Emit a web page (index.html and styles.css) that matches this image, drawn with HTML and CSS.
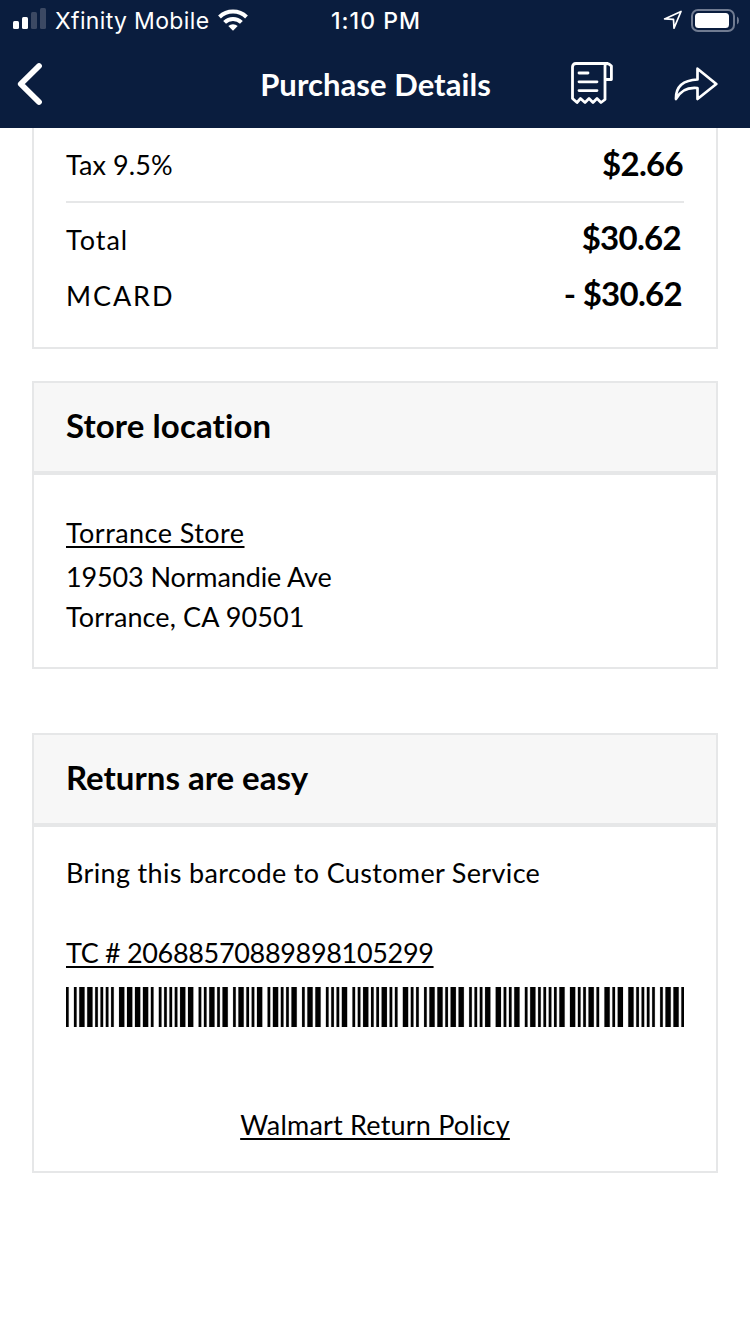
FILE: index.html
```html
<!DOCTYPE html>
<html lang="en">
<head>
<meta charset="utf-8">
<title>Purchase Details</title>
<link rel="stylesheet" href="styles.css">
</head>
<body>
<header class="top">
  <div class="status">
    <div class="status-left">
      <svg class="signal" width="34" height="22" viewBox="0 0 34 22"><g fill="#fff"><rect x="0" y="13" width="6" height="8" rx="1.5"/><rect x="9" y="9" width="6" height="12" rx="1.5"/></g><g fill="#3c4963"><rect x="18" y="4" width="6" height="17" rx="1.5"/><rect x="27" y="0" width="6" height="21" rx="1.5"/></g></svg>
      <span class="carrier">Xfinity Mobile</span>
      <svg class="wifi" width="30" height="22" viewBox="0 0 30 22"><g fill="none" stroke="#fff" stroke-width="4"><path d="M1.5 8A19.5 19.5 0 0 1 28.5 8"/><path d="M6.6 13.4A12 12 0 0 1 23.4 13.4"/></g><path fill="#fff" d="M10.3 17A7 7 0 0 1 19.7 17L15 21.8Z"/></svg>
    </div>
    <span class="time">1:10 PM</span>
    <div class="status-right">
      <svg width="20" height="20" viewBox="0 0 20 20"><path d="M1.6 8.9L18 1.5L11 18.2L10.5 9.4Z" fill="none" stroke="#fff" stroke-width="1.7" stroke-linejoin="round"/></svg>
      <svg width="48" height="23" viewBox="0 0 48 23"><rect x="1" y="1" width="42" height="21" rx="6" fill="none" stroke="#707b91" stroke-width="2"/><rect x="4" y="4" width="34" height="15" rx="3.5" fill="#fff"/><path d="M46 7.5Q48 8.5 48 11.5T46 15.5Z" fill="#707b91"/></svg>
    </div>
  </div>
  <nav class="nav">
    <svg class="back" width="27" height="44" viewBox="0 0 27 44"><path d="M23 4L4.8 22L23 40" fill="none" stroke="#fff" stroke-width="5.8" stroke-linecap="round" stroke-linejoin="round"/></svg>
    <h1 class="title">Purchase Details</h1>
    <div class="actions">
      <svg class="receipt" width="42" height="43" viewBox="0 0 42 43"><g fill="none" stroke="#fff" stroke-width="2.8" stroke-linejoin="round" stroke-linecap="round"><path d="M34 37.5V4Q34 1.5 36 1.5T40.4 4V17.5H35M36.5 1.5H5Q1.5 1.5 1.5 5V36.5L6 40.5L9.5 36.5L14 40.5L18 36.5L22 40.5L26 36.5L30 40.5L34 37.5"/><path d="M8 11H17M8 19.8H26M8 28.6H26"/></g></svg>
      <svg width="44" height="34" viewBox="0 0 44 34"><path d="M23.5 1.7L42.3 17L23.5 32V21Q8.5 19.5 2 32Q1.5 13.5 23.5 12.5Z" fill="none" stroke="#fff" stroke-width="2.7" stroke-linejoin="round"/></svg>
    </div>
  </nav>
</header>
<main class="content">
  <section class="card summary">
    <div class="row tax"><span class="label tax-label">Tax 9.5%</span><b class="amount tax-amount">$2.66</b></div>
    <div class="row total"><span class="label total-label">Total</span><b class="amount total-amount">$30.62</b></div>
    <div class="row"><span class="label card-label">MCARD</span><b class="amount">- $30.62</b></div>
  </section>
  <section class="card store">
    <h2 class="card-head store-head">Store location</h2>
    <div class="store-body">
      <a class="link store-link">Torrance Store</a>
      <p class="line street">19503 Normandie Ave</p>
      <p class="line city">Torrance, CA 90501</p>
    </div>
  </section>
  <section class="card returns">
    <h2 class="card-head">Returns are easy</h2>
    <div class="returns-body">
      <p class="line bring">Bring this barcode to Customer Service</p>
      <a class="link tc">TC # 20688570889898105299</a>
      <svg class="barcode" id="barcode" viewBox="0 0 233 40" preserveAspectRatio="none"></svg>
      <a class="link policy">Walmart Return Policy</a>
    </div>
  </section>
</main>
<script src="barcode.js"></script>
</body>
</html>
```
FILE: styles.css
```css
* { box-sizing: border-box; }
body { margin: 0; background: #fff; color: #000; font-family: Lato, sans-serif; font-variant-ligatures: none; }
h1, h2, p { margin: 0; }
svg { display: block; flex: none; }
.top { height: 128px; background: #0a1d3e; color: #fff; }
.status { height: 40px; display: grid; grid-template-columns: 1fr auto 1fr; align-items: center; padding: 0 11px 0 13px; font-family: Inter, sans-serif; white-space: nowrap; }
.status-left { display: flex; align-items: center; }
.signal { margin-right: 8px; margin-top: -2px; }
.carrier { font-size: 23px; letter-spacing: .35px; width: 154px; margin-right: 9px; padding-top: 2px; }
.time { font-size: 23px; font-weight: 500; letter-spacing: 1.05px; padding-top: 2px; }
.status-right { display: flex; justify-content: flex-end; align-items: center; gap: 8px; }
.nav { height: 88px; display: grid; grid-template-columns: 1fr auto 1fr; align-items: center; padding: 0 32px 0 16px; }
.back { margin-top: -1px; }
.title { font-size: 31px; line-height: 40px; font-weight: 700; letter-spacing: .05px; margin-left: 17px; }
.actions { display: flex; justify-content: flex-end; align-items: center; gap: 61px; }
.receipt { margin-top: -2px; }
.content { padding: 0 32px; }
.card { border: 2px solid #e6e7e8; }
.summary { height: 221px; border-top: 0; padding: 0 32px; }
.row { display: flex; justify-content: space-between; align-items: center; height: 56px; white-space: nowrap; }
.tax { height: 75px; border-bottom: 2px solid #e6e7e8; }
.total { margin-top: 8px; }
.label, .line, .link { font-size: 27px; line-height: 40px; letter-spacing: .45px; }
.label { padding-top: 1px; }
.tax-label { letter-spacing: .1px; }
.total-label { letter-spacing: 1px; }
.card-label { letter-spacing: 1.9px; }
.amount { font-size: 33px; line-height: 40px; letter-spacing: -.7px; padding: 0 2px 4px 0; }
.total-amount { padding-right: 3px; }
.tax-amount { padding-right: 1px; }
.store { margin-top: 32px; height: 288px; }
.card-head { height: 92px; background: #f7f7f7; border-bottom: 4px solid #e6e7e8; padding: 22px 32px; font-size: 33px; line-height: 40px; font-weight: 700; }
.store-head { letter-spacing: .1px; }
.store-body { display: flex; flex-direction: column; align-items: flex-start; padding: 38px 32px; }
.link { text-decoration: underline; text-decoration-thickness: 2px; text-underline-offset: 3px; text-decoration-skip-ink: none; white-space: nowrap; }
.store-link { margin-bottom: 4px; }
.street { letter-spacing: -.13px; }
.city { letter-spacing: .12px; }
.bring { letter-spacing: .34px; }
.returns { margin-top: 64px; height: 440px; }
.returns-body { display: flex; flex-direction: column; align-items: flex-start; padding: 26px 32px; }
.tc { margin-top: 40px; letter-spacing: -.33px; }
.barcode { width: 618px; height: 40px; margin-top: 14px; }
.policy { align-self: center; margin-top: 78px; letter-spacing: .2px; }
```
FILE: barcode.js
```js
// Code 39: five bars and four spaces per character, one wide space
// selected by column and two wide bars selected by row.
const bars = ["10001", "01001", "11000", "00101", "10100", "01100", "00011", "10010", "01010", "00110"];
const columns = ["UVWXYZ-. *", "1234567890", "ABCDEFGHIJ", "KLMNOPQRST"];
let x = 0;
let d = "";
for (const ch of "*GCTSRR3.L7F6YJIW*") {
  const col = columns.findIndex(c => c.includes(ch));
  const pattern = bars[columns[col].indexOf(ch)];
  for (let i = 0; i < 5; i++) {
    const w = pattern[i] === "1" ? 2 : 1;
    d += `M${x} 0h${w}v40h-${w}z`;
    x += w + (i === col ? 2 : 1);
  }
}
document.getElementById("barcode").innerHTML = `<path d="${d}" stroke="#000" stroke-width=".08"/>`;
```
